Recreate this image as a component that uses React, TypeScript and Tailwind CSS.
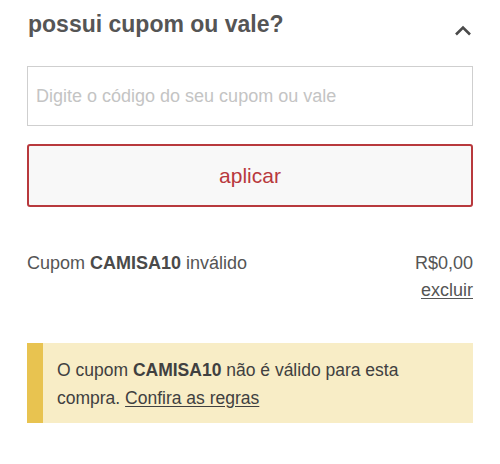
const App = () => {
  return (
    <div className="w-[500px] h-[464px] bg-white px-[27px] font-['Liberation_Sans',Arial,sans-serif]">
      {/* header */}
      <div className="flex items-start justify-between pt-[10px]">
        <h2 className="pl-[1px] text-[23px] leading-[28px] font-bold text-[#555555]">
          possui cupom ou vale?
        </h2>
        <svg
          className="mt-[15px] mr-[1px]"
          width="18"
          height="11"
          viewBox="0 0 18 11"
          fill="none"
        >
          <path
            d="M2 9.5 L9 2.5 L16 9.5"
            stroke="#4a4a4a"
            strokeWidth="2.6"
          />
        </svg>
      </div>

      {/* input */}
      <input
        className="mt-[28px] block w-full h-[60px] border border-[#cfcfcf] px-[8px] text-[18px] text-[#444] placeholder:text-[#c4c4c4] outline-none"
        placeholder="Digite o código do seu cupom ou vale"
      />

      {/* button */}
      <button className="mt-[18px] block w-full h-[63px] rounded-[3px] border-2 border-[#b8393d] bg-[#f8f8f8] text-[21px] text-[#b8393d]">
        aplicar
      </button>

      {/* coupon row */}
      <div className="mt-[43px] flex justify-between text-[18px] leading-[27px] text-[#555555]">
        <span>
          Cupom <b className="text-[#4a4a4a]">CAMISA10</b> inválido
        </span>
        <div className="flex flex-col items-end">
          <span>R$0,00</span>
          <a className="underline underline-offset-2">excluir</a>
        </div>
      </div>

      {/* warning */}
      <div className="mt-[39px] flex h-[80px] bg-[#f8edc6]">
        <div className="w-[16px] bg-[#e8c350]" />
        <p className="pl-[14px] pr-[10px] pt-[13px] text-[17.5px] leading-[28px] text-[#404040]">
          O cupom <b>CAMISA10</b> não é válido para esta
          <br />
          compra. <a className="underline underline-offset-2">Confira as regras</a>
        </p>
      </div>
    </div>
  );
};

export default App;
